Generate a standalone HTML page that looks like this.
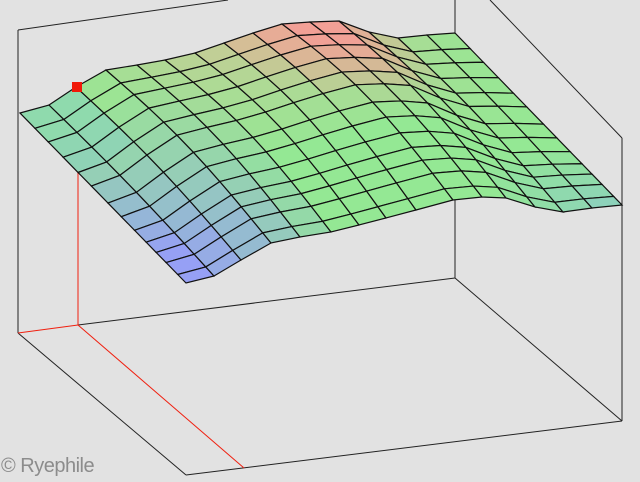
<!DOCTYPE html>
<html><head><meta charset="utf-8"><style>
html,body{margin:0;padding:0;background:#e2e2e2;width:640px;height:482px;overflow:hidden}
svg{display:block}
.c{position:absolute;left:1px;top:455px;font:20px "Liberation Sans",sans-serif;color:#8c8c8c;letter-spacing:-0.5px}
</style></head><body>
<svg id="s" width="640" height="482" viewBox="0 0 640 482">
<g stroke="#222" stroke-width="1" fill="none">
<line x1="18" y1="30" x2="228" y2="0"/>
<line x1="18" y1="30" x2="18" y2="333"/>
<line x1="455" y1="0" x2="455" y2="278"/>
<line x1="490" y1="0" x2="622" y2="138"/>
<line x1="622" y1="138" x2="622" y2="421"/>
<line x1="78" y1="325" x2="455" y2="278"/>
<line x1="455" y1="278" x2="622" y2="421"/>
<line x1="18" y1="333" x2="186" y2="475"/>
<line x1="186" y1="475" x2="622" y2="421"/>
</g>
<g stroke="#f02010" stroke-width="1">
<line x1="18" y1="333" x2="78" y2="325"/>
<line x1="78" y1="88" x2="78" y2="325"/>
<line x1="78" y1="325" x2="244" y2="468"/>
</g>
<g id="surf"></g>
<rect x="72" y="82" width="10" height="10" fill="#f01808"/>
</svg>
<div class="c">© Ryephile</div>
<script>
var B=[[20,113],[49,105],[76,87],[106,70],[137,65],[165,60],[195,53],[224,43],[253,33],[282,24],[310,22],[339,21],[369,32],[398,38],[427,35],[455,33]];
var F=[[186,283],[214,276],[241,260],[271,243],[300,237],[331,232],[359,225],[386,218],[416,210],[453,200],[482,197],[506,198],[535,207],[563,212],[592,208],[622,205]];
var T=[0,.09,.17,.26,.35,.43,.53,.61,.69,.76,.82,.88,.95,1];
var N=B.length,M=T.length;
function P(i,j){var t=T[j];var A=16*Math.sin(Math.PI*i/(N-1));
return [B[i][0]+(F[i][0]-B[i][0])*t, B[i][1]+(F[i][1]-B[i][1])*t - A*Math.sin(Math.PI*t)];}
function mix(a,b,k){k=Math.max(0,Math.min(1,k));return [a[0]+(b[0]-a[0])*k,a[1]+(b[1]-a[1])*k,a[2]+(b[2]-a[2])*k];}
var G=[148,232,148],R=[242,160,150],Tan=[205,200,150],Bl=[150,160,245],Te=[140,208,190];
var h='';
for(var j=0;j<M-1;j++)for(var i=0;i<N-1;i++){
var a=P(i,j),b=P(i+1,j),c=P(i+1,j+1),d=P(i,j+1);
var col=G;
// tan band on back rows
var tn=Math.max(0,1-j/7)*Math.max(0,1-Math.abs(i-8)/7);
col=mix(col,Tan,tn*1.1);
var dr=Math.sqrt(Math.pow((i-9.5)/3.2,2)+Math.pow(j/5.5,2));
col=mix(col,R,(1-dr)*1.3);
// blue left-front
var lb=Math.max(0,1-i/5)*Math.min(1,(j-1)/9);
col=mix(col,Bl,lb*1.05);
// teal left back
if(i<2&&j<4)col=mix(col,Te,0.6);
var dt=Math.sqrt(Math.pow((N-2-i)/4,2)+Math.pow((M-2-j)/5,2));
col=mix(col,Te,(1-dt)*0.9);
h+='<polygon points="'+a+' '+b+' '+c+' '+d+'" fill="rgb('+col.map(Math.round)+')" stroke="#111" stroke-width="1.2"/>';
}
document.getElementById('surf').innerHTML=h;
</script>
</body></html>
